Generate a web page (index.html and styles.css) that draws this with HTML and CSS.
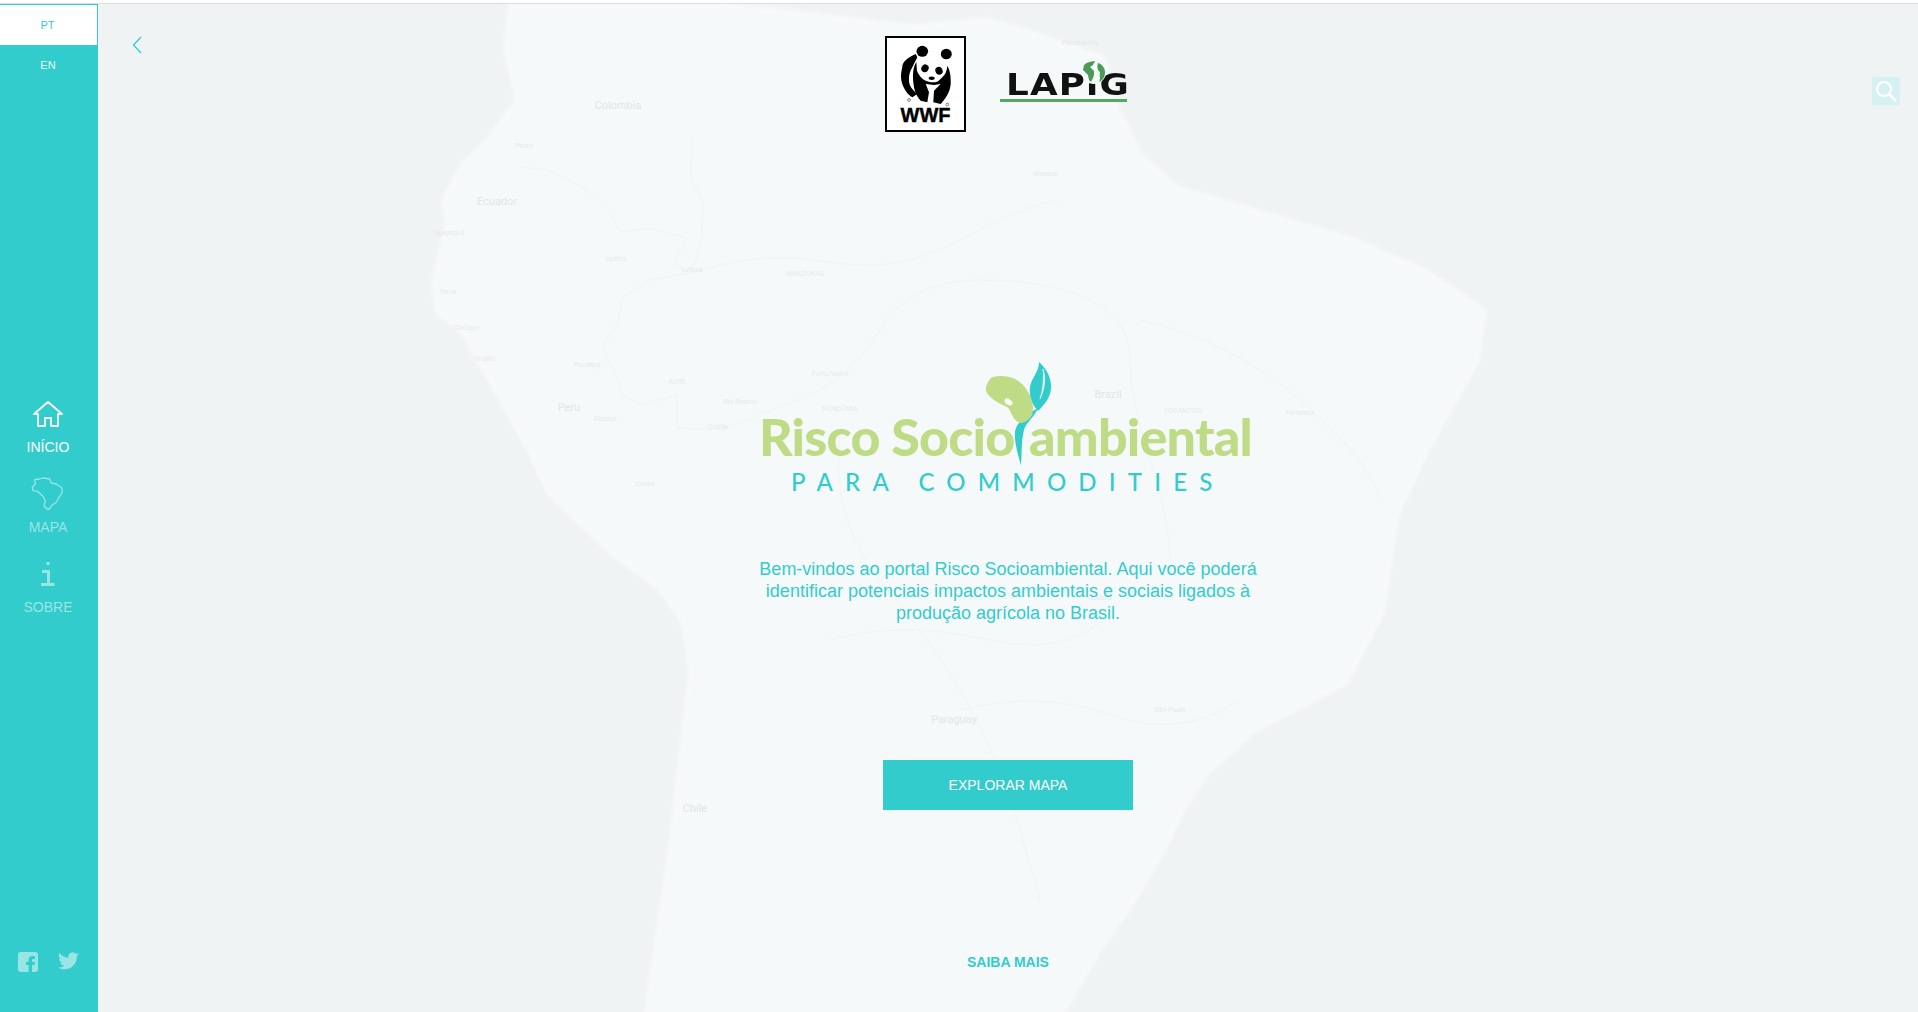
FILE: index.html
```html
<!DOCTYPE html>
<html lang="pt">
<head>
	<meta charset="UTF-8">
	<title>Risco Socioambiental</title>
	<link rel="stylesheet" href="styles.css">
</head>
<body>
	<div class="topline"></div>
	<div class="app">
		<aside class="sidebar">
			<div class="langs">
				<a class="lang active">PT</a>
				<a class="lang">EN</a>
			</div>
			<nav class="nav">
				<a class="nav-item active">
					<svg class="nav-icon" width="32" height="28" viewBox="0 0 32 28"><path d="M2 14 16 2l14 12h-4v12h-7v-8h-6v8H6V14z" fill="none" stroke="#fff" stroke-width="1.8" stroke-linejoin="round"/></svg>
					<span>INÍCIO</span>
				</a>
				<a class="nav-item">
					<svg class="nav-icon" width="34" height="34" viewBox="0 0 34 34"><path d="M1.300 10.300 4.300 7 3.700 2.700 8.700 2 12 .8 18.700 2 20.300 6 25.300 7 31 11 31.300 15.300 28 20.300 25.300 25.300 20.300 28.700 18.700 32H16L13 28.700 14.300 23.700 12 19.300 7 14.700 2 13.700z" fill="none" stroke="#99e5e5" stroke-width="1.300" stroke-linejoin="round"/></svg>
					<span>MAPA</span>
				</a>
				<a class="nav-item">
					<svg class="nav-icon" width="16" height="26" viewBox="0 0 16 26"><path d="M6.500 1h3v3h-3zM2 9h8v13h4.500v3H1v-3h6V12H2z" fill="#99e5e5"/></svg>
					<span>SOBRE</span>
				</a>
			</nav>
			<div class="socials">
				<svg width="20" height="20" viewBox="0 0 20 20"><path d="M3 0h14a3 3 0 0 1 3 3v14a3 3 0 0 1-3 3h-3v-7h2.500l.5-3h-3V8.500c0-1 .5-1.500 1.500-1.500H17V4h-2.500C12 4 10.500 5.500 10.500 8v2H8v3h2.500v7H3a3 3 0 0 1-3-3V3a3 3 0 0 1 3-3z" fill="#99e5e5"/></svg>
				<svg width="21" height="18" viewBox="0 0 24 20"><path d="M24 2.400c-.9.400-1.800.7-2.800.8 1-.6 1.800-1.600 2.200-2.700-1 .6-2 1-3.100 1.200A4.900 4.900 0 0 0 11.900 6.200 14 14 0 0 1 1.700.9a4.900 4.900 0 0 0 1.500 6.600c-.8 0-1.600-.2-2.200-.6 0 2.400 1.700 4.400 3.900 4.900-.7.200-1.500.2-2.200.1.600 2 2.400 3.400 4.600 3.400A9.900 9.900 0 0 1 0 17.300 14 14 0 0 0 7.500 19.500c9.100 0 14.300-7.700 14-14.600 1-.7 1.800-1.600 2.500-2.500z" fill="#99e5e5"/></svg>
			</div>
		</aside>

		<main class="main">
			<svg class="map" width="1820" height="1008" viewBox="98 4 1820 1008">
				<path class="land" d="M510 4 505 50 517 100 487 140 463 163 443 200 447 223 433 283 437 313 463 333 493 387 527 447 548 493 613 555 657 587 682 620 690 671 682 742 671 839 657 936 646 1012H1064L1097 955 1133 903 1163 852 1185 807 1207 774 1258 729 1346 684 1383 613 1397 516 1427 452 1478 361 1485 310 1427 271 1353 239 1265 213 1177 187 1141 155 1119 110 1104 58 1031 32 987 19 913 26 723 4z"/>
				<path class="road" d="M520 167 547 170 570 180 590 193 610 213 620 232 650 228 687 238 673 263 690 273 650 280 623 297 617 323 602 347 620 383 620 393 640 405 677 395 677 428 720 430 797 400M693 140 690 177 703 203 702 240 692 273"/>
				<path class="road" d="M797 400Q850 380 880 330T980 280 1090 300 1130 360 1150 460 1170 560M692 273Q760 250 830 262T960 240 1060 200M840 430Q830 520 880 580T960 690 1010 800 1040 900M960 710Q1040 690 1110 715T1240 700M830 640Q900 620 990 640T1120 600M1140 320Q1230 340 1300 400T1380 500"/>
				<text class="place" x="618" y="109">Colombia</text>
				<text class="place" x="497" y="205">Ecuador</text>
				<text class="place" x="569" y="411">Peru</text>
				<text class="place" x="1108" y="398">Brazil</text>
				<text class="place" x="954" y="723">Paraguay</text>
				<text class="place" x="695" y="812">Chile</text>
				<text class="place small" x="616" y="261">Iquitos</text>
				<text class="place small" x="524" y="148">Pasto</text>
				<text class="place small" x="449" y="235">Guayaquil</text>
				<text class="place small" x="448" y="294">Piura</text>
				<text class="place small" x="466" y="330">Chiclayo</text>
				<text class="place small" x="485" y="361">Trujillo</text>
				<text class="place small" x="587" y="367">Pucallpa</text>
				<text class="place small" x="605" y="421">Atalaya</text>
				<text class="place small" x="645" y="486">Cusco</text>
				<text class="place small" x="740" y="404">Rio Branco</text>
				<text class="place small" x="718" y="429">Cobija</text>
				<text class="place small" x="692" y="272">Leticia</text>
				<text class="place small" x="677" y="384">ACRE</text>
				<text class="place small" x="805" y="276">AMAZONAS</text>
				<text class="place small" x="830" y="376">Porto Velho</text>
				<text class="place small" x="840" y="411">RONDÔNIA</text>
				<text class="place small" x="1183" y="413">TOCANTINS</text>
				<text class="place small" x="1045" y="176">Manaus</text>
				<text class="place small" x="1080" y="45">Paramaribo</text>
				<text class="place small" x="1300" y="415">Fortaleza</text>
				<text class="place small" x="1100" y="600">Goiânia</text>
				<text class="place small" x="1170" y="712">São Paulo</text>
			</svg>

			<a class="back">
				<svg width="10" height="18" viewBox="0 0 10 18"><path d="M9 1 1.500 9 9 17" fill="none" stroke="#33cccc" stroke-width="1.300"/></svg>
			</a>
			<a class="search">
				<svg width="24" height="24" viewBox="0 0 24 24"><circle cx="10" cy="10" r="7" fill="none" stroke="#fff" stroke-width="2"/><path d="M15 15l7 7" stroke="#fff" stroke-width="2.500"/></svg>
			</a>

			<div class="partners">
				<div class="wwf">
					<svg width="77" height="69" viewBox="0 0 77 69">
						<ellipse cx="35.300" cy="13.300" rx="5.800" ry="5.500"/>
						<ellipse cx="59.300" cy="16" rx="5.500" ry="5.300"/>
						<path d="M28.700 16C20 20 15.300 24 15.300 29.300 13.500 36 13.500 41 15.300 46 17.500 52 21 57 25.300 59.300L30.300 56C26 52 22 48 22 42.700 21.500 38 23 33 25.300 29.300L30.300 19.300z"/>
						<path d="M29.300 24C26 30 25 36 27 49.300 28 55 31 60 33.700 62.700L40.300 64.300 42 54.300 38.700 46 47 47 53.700 46 47 52.700 46.300 64.300 53.700 66C59 60 63 54 63.700 46 64 38 63 32 60.300 27.700 60 33 58 37 55.300 39.300 52 43 50 44.300 47 44.300 43 44.500 41 43.500 38.700 42.700 35 41 32 37.700 30 33 29 29 29.300 24z"/>
						<ellipse cx="38" cy="30.300" rx="3.600" ry="4" transform="rotate(25 38 30.300)"/>
						<ellipse cx="52" cy="32.700" rx="3.600" ry="4" transform="rotate(-20 52 32.700)"/>
						<ellipse cx="44.700" cy="40.300" rx="3" ry="1.700"/>
						<circle cx="22" cy="62" r="1.400" fill="none" stroke="#333" stroke-width=".6"/>
						<circle cx="60.300" cy="66.500" r="1.400" fill="none" stroke="#333" stroke-width=".6"/>
					</svg>
					<span class="wwf-text">WWF</span>
				</div>
				<div class="lapig">
					<span class="lapig-text">LAPiG</span>
					<svg class="globe" width="24" height="24" viewBox="0 0 24 24">
						<circle cx="12" cy="12" r="12" fill="#f6f9fa"/>
						<path d="M2 5C5 2 10 1 13 1L11 5 8 7 10 9 12 11 12 15 11 18 9 22 7 20 6 15 3 12 1 10zM16 3C20 4 23 8 23 12 23 17 21 20 17 22 19 18 17 15 18 12 15 10 15 6 16 3z" fill="#4c9a57"/>
					</svg>
					<div class="lapig-bar"></div>
				</div>
			</div>

			<div class="brand">
				<svg class="sprout" width="510" height="150" viewBox="0 0 510 150">
					<path d="M271 116C268 104 264 92 265 82 266 74 273 68 281 62L288 58C284 68 276 72 274 80 271 92 272 104 271 116z" fill="#33cccc"/>
					<path d="M289 12C297 19 302 29 301 39 300 48 295 54 288 61 283 55 280 50 280 43 279 36 282 30 285 25 287 21 289 17 289 12z" fill="#33cccc"/>
					<path d="M293 19C296 28 295 38 290 49 293 39 294 29 293 19z" fill="#f6f9fa" stroke="#f6f9fa" stroke-width=".6"/>
					<path d="M243 27C250 25 257 26 263 28 270 31 275 36 278 42 281 47 283 53 283 58 283 63 282 66 280 68 277 71 274 73 270 73 266 72 264 68 262 65 260 61 259 58 257 57 253 55 250 54 247 52 242 49 239 46 237 43 235 39 236 36 237 35 238 31 240 28 243 27z" fill="#bddc85"/>
					<ellipse cx="258.500" cy="52" rx="4.500" ry="2.800" transform="rotate(35 258.500 52)" fill="#f6f9fa"/>
				</svg>
				<div class="brand-title"><span>Risco Socio</span><span>ambiental</span></div>
				<div class="brand-sub">PARA COMMODITIES</div>
			</div>

			<p class="intro">Bem-vindos ao portal Risco Socioambiental. Aqui você poderá identificar potenciais impactos ambientais e sociais ligados à produção agrícola no Brasil.</p>

			<a class="btn">EXPLORAR MAPA</a>
			<a class="more">SAIBA MAIS</a>
		</main>
	</div>
</body>
</html>
```

FILE: styles.css
```css
*{
	box-sizing: border-box;
}
html,body{
	margin: 0;
	height: 100%;
	overflow: hidden;
}
body{
	background: #fff;
	font-family: "Liberation Sans", Arial, sans-serif;
}
.topline{
	height: 4px;
	border-bottom: 1px solid #dcdfe0;
}
.app{
	display: flex;
	height: 1008px;
}

/* menu lateral */
.sidebar{
	width: 98px;
	flex: none;
	background: #33cccc;
	display: flex;
	flex-direction: column;
	align-items: stretch;
}
.langs{
	height: 390px;
	padding-right: 2px;
}
.lang{
	display: block;
	height: 41px;
	line-height: 41px;
	text-align: center;
	font-size: 11px;
	color: #e6f9f9;
}
.active.lang{
	background: #fff;
	color: #33cccc;
	margin-right: -2px;
	padding-right: 2px;
	border: 1px solid #33cccc;
	border-width: 1px 1px 0 0;
}
.nav{
	display: flex;
	flex-direction: column;
	padding-right: 2px;
}
.nav-item{
	height: 80px;
	display: flex;
	flex-direction: column;
	align-items: center;
	font-size: 14px;
	color: #99e5e5;
}
.nav-item.active{
	color: #fff;
}
.nav-icon{
	height: 40px;
	flex: none;
}
.nav-item span{
	line-height: 16px;
	margin-top: 5px;
}
.socials{
	margin-top: auto;
	height: 60px;
	padding: 0 19px 0 18px;
	display: flex;
	justify-content: space-between;
	align-items: flex-start;
}

/* area principal */
.main{
	position: relative;
	flex: 1;
	background: #f0f3f4;
	display: flex;
	flex-direction: column;
	align-items: center;
	overflow: hidden;
}
.map{
	position: absolute;
	left: 0;
	top: 0;
}
.land{
	fill: #f6f9fa;
	stroke: #f8fafb;
	stroke-width: 3;
	stroke-linejoin: round;
	filter: blur(2px);
}
.road{
	fill: none;
	stroke: #f0f4f5;
	stroke-width: 1;
}
.place{
	fill: #e1e6e8;
	font-family: Roboto, sans-serif;
	font-size: 11px;
	text-anchor: middle;
}
.place.small{
	font-size: 7px;
	fill: #e6eaec;
}
.back{
	position: absolute;
	left: 34px;
	top: 32px;
	line-height: 0;
}
.search{
	position: absolute;
	left: 1774px;
	top: 73px;
	width: 28px;
	height: 28px;
	background: #d6f1f1;
	border-radius: 2px;
	display: flex;
	align-items: center;
	justify-content: center;
}

.partners,.brand,.intro,.btn,.more{
	position: relative;
}
.partners{
	margin: 32px 4px 0 0;
	height: 96px;
	width: 242px;
	display: flex;
	align-items: flex-start;
	gap: 34px;
}
.wwf{
	width: 81px;
	height: 96px;
	flex: none;
	background: #fff;
	border: 2px solid #000;
	display: flex;
	flex-direction: column;
	align-items: center;
}
.wwf svg{
	flex: none;
}
.wwf-text{
	font-size: 20px;
	font-weight: bold;
	line-height: 17px;
	color: #000;
	-webkit-text-stroke: .4px #000;
}
.lapig{
	position: relative;
	width: 127px;
	margin-top: 24px;
	height: 42px;
}
.lapig-text{
	position: absolute;
	left: 6px;
	top: 10px;
	font-family: "DejaVu Sans", sans-serif;
	font-size: 30px;
	font-weight: bold;
	line-height: 30px;
	letter-spacing: 1px;
	color: #111;
	white-space: nowrap;
	transform: scaleX(1.190);
	transform-origin: left center;
}
.globe{
	position: absolute;
	left: 82px;
	top: 0;
}
.lapig-bar{
	position: absolute;
	left: 0;
	right: 0;
	bottom: 0;
	height: 3px;
	background: #55a85f;
}

.brand{
	width: 510px;
	height: 150px;
	margin-top: 218px;
	font-family: Lato, sans-serif;
}
.sprout{
	position: absolute;
	left: -3px;
	top: 0;
	z-index: 1;
}
.brand-title{
	position: absolute;
	left: 6px;
	top: 56px;
	width: 493px;
	display: flex;
	justify-content: space-between;
	font-size: 52px;
	line-height: 60px;
	font-weight: 900;
	color: #bddc85;
	letter-spacing: -.8px;
}
.brand-sub{
	position: absolute;
	left: 38px;
	top: 118px;
	font-size: 24px;
	line-height: 28px;
	font-weight: 500;
	letter-spacing: 12.200px;
	word-spacing: 0;
	color: #33cccc;
	white-space: nowrap;
}

.intro{
	width: 510px;
	margin: 58px 0 0;
	text-align: center;
	font-size: 18px;
	line-height: 22px;
	color: #33cccc;
}
.btn{
	width: 250px;
	height: 50px;
	margin-top: 136px;
	background: #33cccc;
	color: #fff;
	font-size: 14px;
	line-height: 50px;
	text-align: center;
}
.more{
	margin-top: 144px;
	font-size: 14px;
	line-height: 16px;
	font-weight: bold;
	color: #33cccc;
}
```
